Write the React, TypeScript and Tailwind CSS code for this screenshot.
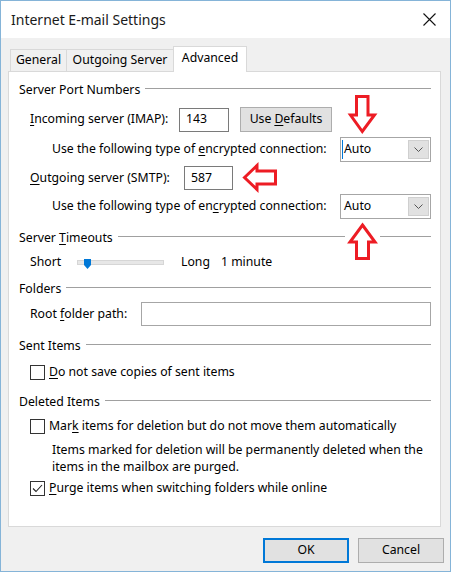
import React from 'react'

function GroupHeader({ children, className = '' }: { children: React.ReactNode; className?: string }) {
  return (
    <div className={'flex items-center h-[18px] ' + className}>
      <span className="whitespace-nowrap">{children}</span>
      <div className="flex-1 h-px bg-[#a0a0a0] ml-[5px] -mt-[3px]" />
    </div>
  )
}

function Check({ checked = false }: { checked?: boolean }) {
  return (
    <span className="w-[15px] h-[15px] border border-[#333] bg-white flex items-center justify-center shrink-0">
      {checked && (
        <svg width="11" height="9" viewBox="0 0 11 9">
          <path d="M1 4.5 L4 7.5 L10 1" fill="none" stroke="#222" strokeWidth="1.1" />
        </svg>
      )}
    </span>
  )
}

function Select({ caret = false }: { caret?: boolean }) {
  return (
    <div className="ml-auto w-[91px] h-[25px] border border-[#a6a6a6] bg-white flex items-center relative">
      {caret && <span className="absolute left-[1px] top-[2px] w-px h-[19px] bg-[#0078d7]" />}
      <span className="pl-[3px]">Auto</span>
      <span className="ml-auto mr-[1px] w-[21px] h-[19px] bg-[#e1e1e1] border border-[#cfcfcf] flex items-center justify-center">
        <svg width="9" height="5" viewBox="0 0 9 5">
          <path d="M0.5 0.5 L4.5 4.5 L8.5 0.5" fill="none" stroke="#555" strokeWidth="1" />
        </svg>
      </span>
    </div>
  )
}

export default function App() {
  return (
    <div className="relative w-[451px] h-[572px] border border-[#85b4d8] bg-[#f0f0f0] flex flex-col text-[12.25px] text-black font-['Noto_Sans',sans-serif] leading-none overflow-hidden">
      <div className="h-[37px] bg-white flex items-center pl-[10px] shrink-0">
        <span className="text-[14px] text-[#1a1a1a]">Internet E-mail Settings</span>
        <svg className="ml-auto mr-[14px]" width="13" height="13" viewBox="0 0 13 13">
          <path d="M0.5 0.5 L12.5 12.5 M12.5 0.5 L0.5 12.5" stroke="#111" strokeWidth="1.1" />
        </svg>
      </div>

      <div className="pl-[7px] pt-[8px] flex flex-col">
        <div className="flex items-end h-[25px] pl-[2px] relative z-10">
          <div className="w-[57px] h-[22px] border border-b-0 border-[#d9d9d9] flex items-center justify-center">General</div>
          <div className="w-[107px] h-[22px] border border-l-0 border-b-0 border-[#d9d9d9] flex items-center justify-center">Outgoing Server</div>
          <div className="w-[74px] h-[26px] -ml-px -mb-px border border-b-0 border-[#d9d9d9] bg-white flex items-center justify-center pb-[3px]">Advanced</div>
        </div>

        <div className="w-[433px] h-[456px] border border-[#d9d9d9] bg-white pl-[10px] pr-[9px] pt-[9px] flex flex-col">
          <GroupHeader>Server Port Numbers</GroupHeader>

          <div className="mt-[8px] h-[25px] flex items-center pl-[11px]">
            <span className="w-[149px]"><u className="underline-offset-2">I</u>ncoming server (IMAP):</span>
            <div className="w-[50px] h-[24px] border border-[#7a7a7a] flex items-center pl-[6px]">143</div>
            <div className="ml-[11px] w-[92px] h-[25px] bg-[#e1e1e1] border border-[#adadad] flex items-center justify-center">
              Use <u className="ml-[3px] underline-offset-2">D</u>efaults
            </div>
          </div>

          <div className="mt-[5px] h-[25px] flex items-center pl-[33px]">
            <span>Use the following type of <u className="underline-offset-2">e</u>ncrypted connection:</span>
            <Select caret />
          </div>

          <div className="mt-[4px] h-[24px] flex items-center pl-[11px]">
            <span className="w-[154px]"><u className="underline-offset-2">O</u>utgoing server (SMTP):</span>
            <div className="w-[49px] h-[24px] border border-[#7a7a7a] flex items-center pl-[6px]">587</div>
          </div>

          <div className="mt-[4px] h-[25px] flex items-center pl-[33px]">
            <span>Use the following type of en<u className="underline-offset-2">c</u>rypted connection:</span>
            <Select />
          </div>

          <GroupHeader className="mt-[10px]">Server <u className="underline-offset-2">T</u>imeouts</GroupHeader>

          <div className="mt-[6px] h-[18px] flex items-center pl-[11px]">
            <span className="w-[47px]">Short</span>
            <div className="relative w-[87px] h-[5px] bg-[#e7e7e7] border border-[#d6d6d6]">
              <svg className="absolute left-[6px] -top-[2px]" width="7" height="10" viewBox="0 0 7 10">
                <path d="M0 0 H7 V6 L3.5 10 L0 6 Z" fill="#0078d7" />
              </svg>
            </div>
            <span className="ml-[17px]">Long</span>
            <span className="ml-[11px]">1 minute</span>
          </div>

          <GroupHeader className="mt-[9px]">Folders</GroupHeader>

          <div className="mt-[4px] h-[24px] flex items-center pl-[11px]">
            <span className="w-[111px]">Root <u className="underline-offset-2">f</u>older path:</span>
            <div className="flex-1 h-[24px] border border-[#a6a6a6]" />
          </div>

          <GroupHeader className="mt-[11px]">Sent Items</GroupHeader>

          <div className="mt-[8px] h-[18px] flex items-center pl-[11px] gap-[4px]">
            <Check />
            <span><u className="underline-offset-2">D</u>o not save copies of sent items</span>
          </div>

          <GroupHeader className="mt-[12px]">Deleted Items</GroupHeader>

          <div className="mt-[6px] h-[18px] flex items-center pl-[11px] gap-[4px]">
            <Check />
            <span>Mar<u className="underline-offset-2">k</u> items for deletion but do not move them automatically</span>
          </div>

          <div className="mt-[6px] pl-[33px] leading-[17px]">
            Items marked for deletion will be permanently deleted when the<br />
            items in the mailbox are purged.
          </div>

          <div className="mt-[4px] h-[18px] flex items-center pl-[11px] gap-[4px]">
            <Check checked />
            <span><u className="underline-offset-2">P</u>urge items when switching folders while online</span>
          </div>
        </div>

        <div className="mt-[11px] flex justify-end gap-[9px] pr-[6px]">
          <div className="w-[86px] h-[25px] bg-[#e1e1e1] border-2 border-[#0078d7] flex items-center justify-center">OK</div>
          <div className="w-[86px] h-[25px] bg-[#e1e1e1] border border-[#adadad] flex items-center justify-center">Cancel</div>
        </div>
      </div>

      <svg className="absolute left-[-1px] top-[-1px] pointer-events-none" width="451" height="572" viewBox="0 0 451 572">
        <path d="M356.5 96.5 H368 V115 H374.5 L362.3 131.5 L350.5 115 H356.5 Z" fill="white" stroke="#ed1c24" strokeWidth="3" />
        <path d="M244.5 177.5 L257 165.5 V171 H275.5 V184 H257 V189.5 Z" fill="white" stroke="#ed1c24" strokeWidth="3" />
        <rect x="345" y="233" width="35" height="6" fill="white" />
        <path d="M362.5 225 L375 242 H368.5 V258.5 H356.5 V242 H350 Z" fill="white" stroke="#ed1c24" strokeWidth="3" />
      </svg>
    </div>
  )
}
